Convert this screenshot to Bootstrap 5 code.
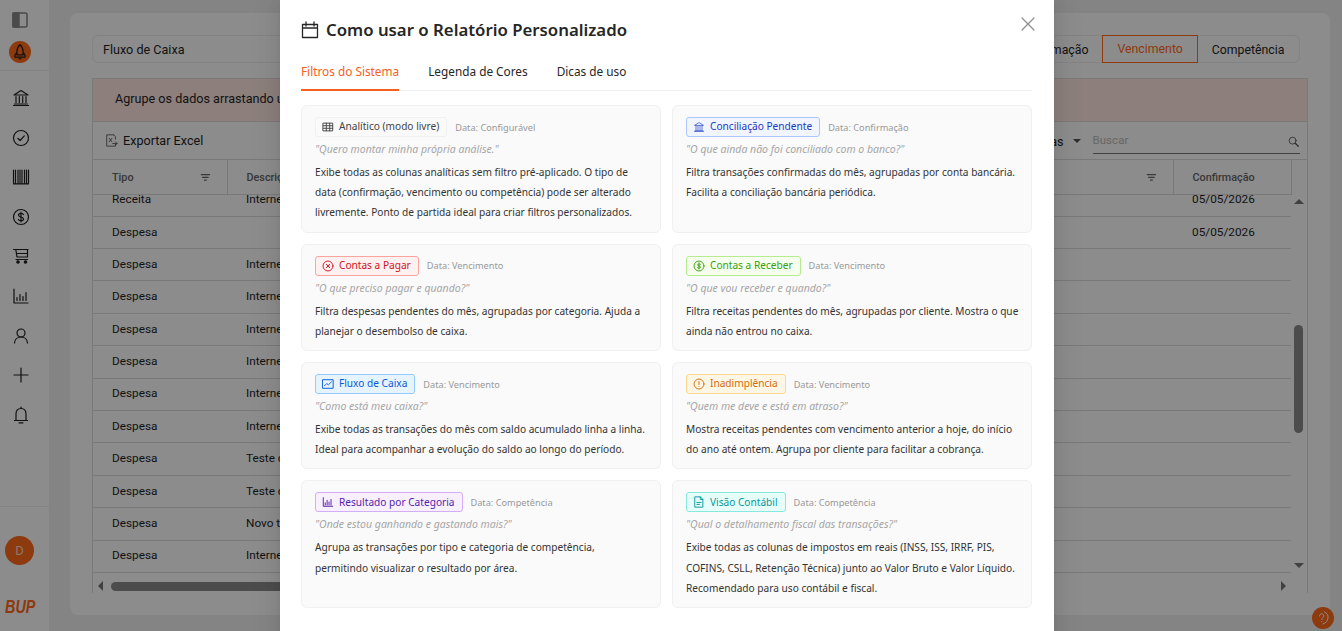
<!DOCTYPE html>
<html lang="pt-BR">
<head>
    <meta charset="UTF-8">
    <meta name="viewport" content="width=device-width, initial-scale=1.0">
    <title>Relatório Personalizado</title>
    <link href="https://cdn.jsdelivr.net/npm/bootstrap@5.3.0/dist/css/bootstrap.min.css" rel="stylesheet">
    <style>
        html, body { height: 631px; overflow: hidden; }
        body { background: #f0f0f0; font-family: Roboto, "Liberation Sans", sans-serif; font-size: 12.6px; color: #1f1f1f; }
        .ico { width: 1em; height: 1em; fill: none; stroke: currentColor; stroke-width: 1.5; stroke-linecap: round; stroke-linejoin: round; flex: none; }

        /* sidebar */
        .side-bar { width: 49px; height: 631px; background: #fff; flex: none; }
        .side-top { height: 71px; border-bottom: 1px solid #efefef; padding: 10px 9px 0 0; }
        .side-top .ico { font-size: 20px; }
        .rocket-dot { width: 22px; height: 22px; border-radius: 50%; background: #ff6a1a; color: #1f1f1f; margin-top: 11px; }
        .rocket-dot .ico { font-size: 18px; stroke-width: 1.1; }
        .side-menu { height: 435px; padding: 17px 7px 0 0; gap: 19.6px; }
        .side-menu .ico { font-size: 20px; stroke-width: 1.2; }
        .side-foot { border-top: 1px solid #efefef; height: 125px; padding-top: 29px; }
        .avatar-d { width: 29px; height: 29px; border-radius: 50%; background: #ff6a1a; color: #ffd9c4; font-size: 13px; margin-left: -10px; }
        .bup-logo { color: #ff6a1a; font: italic 700 18px/1 "Liberation Sans", sans-serif; margin: 33px 0 0 5px; align-self: flex-start; transform: scaleX(.8); transform-origin: left; }

        /* page behind the dialog */
        .page-area { padding: 13px 14px 16px 21px; }
        .main-box { background: #fff; border-radius: 8px; height: 602px; padding: 22px; }
        .top-filters { height: 28px; margin-bottom: 15px; }
        .fake-select { width: 200px; height: 28px; border: 1px solid #eee; border-radius: 6px; padding: 0 10px; line-height: 28px; }
        .segment { border: 1px solid #eee; border-radius: 6px; height: 28px; margin-right: 8px; font-size: 12.3px; }
        .segment span { padding: 0 14px; line-height: 28px; }
        .segment .seg-on { border: 1px solid #ff6a1a; color: #ff6a1a; margin: -1px 0; height: 28px; line-height: 26px; padding: 0 14px; }
        .grid-box { border: 1px solid #ddd; height: 515px; }
        .group-panel { height: 43px; background: #ffe8e2; border-bottom: 1px solid #ddd; padding-left: 22px; line-height: 40px; }
        .grid-tools { height: 38px; border-bottom: 1px solid #ddd; padding: 0 7px 0 12px; }
        .grid-tools .ico { font-size: 13px; color: #555; stroke-width: 1; }
        .export-btn { gap: 5px; padding-top: 1px; }
        .cols-caret { width: 0; height: 0; border: 4px solid transparent; border-top-color: #555; border-bottom: 0; margin-left: 9px; }
        .search-box { width: 207px; height: 27px; border-bottom: 1px solid #777; color: #bbb; margin-left: 12px; font-size: 11.6px; padding-top: 2px; }
        .grid-table { table-layout: fixed; width: 1198px; margin: 0; border-collapse: collapse; }
        .grid-head th { height: 34px; border-bottom: 1px solid #ddd; border-right: 1px solid #ddd; font-weight: 500; font-size: 10.800px; color: #666; padding: 2px 16px 0 19px; background: #fff; }
        .grid-body { height: 379px; overflow: hidden; }
        .grid-scroll-y { width: 15px; background: #fff; }
        .grid-rows { margin-top: -10.700px; }
        .grid-rows td { height: 32.400px; border-bottom: 1px solid #ddd; padding: 0 19px; white-space: nowrap; overflow: hidden; background: #fff; font-size: 11.800px; line-height: 1; }
        .v-thumb { position: absolute; left: 2px; top: 165px; width: 9px; height: 108px; border-radius: 5px; background: #8a8a8a; }
        .h-bar { height: 20px; background: #fff; position: relative; }
        .h-thumb { position: absolute; left: 18px; top: 8px; width: 400px; height: 9px; border-radius: 5px; background: #8a8a8a; }
        .arrow-l, .arrow-r, .arrow-u, .arrow-d { position: absolute; width: 0; height: 0; border: 5px solid transparent; }
        .arrow-l { left: 5px; top: 7px; border-right-color: #777; border-left: 0; }
        .arrow-r { right: 21px; top: 7px; border-left-color: #777; border-right: 0; }
        .arrow-u { left: 2px; top: 39px; border-bottom-color: #777; border-top: 0; }
        .arrow-d { left: 2px; bottom: 6px; border-top-color: #777; border-bottom: 0; }
        .help-bubble { position: absolute; left: 1312px; top: 607px; width: 22px; height: 22px; border-radius: 50%; background: #ff6a1a; color: #fff; z-index: 1; }
        .help-bubble .ico { font-size: 16px; stroke-width: 1; }

        /* dialog */
        .dim-layer { position: absolute; inset: 0; background: rgba(0,0,0,.45); z-index: 2; overflow: hidden; }
        .help-dialog { position: absolute; left: 280px; top: -8px; width: 774px; height: 660px; background: #fff; border-radius: 8px; padding: 26px 22px 0 21px; box-shadow: 0 6px 16px rgba(0,0,0,.08), 0 3px 6px -4px rgba(0,0,0,.12), 0 9px 28px 8px rgba(0,0,0,.05); font-family: "Noto Sans", "Open Sans", sans-serif; color: #262626; }
        .help-title { font-size: 16.800px; font-weight: 600; line-height: 24px; gap: 7px; margin-bottom: 14px; }
        .help-title .ico { font-size: 18px; stroke-width: 1.300; }
        .close-x { position: absolute; left: 741px; top: 25px; width: 14px; height: 14px; color: #8c8c8c; }
        .tab-row { border-bottom: 1px solid #f0f0f0; height: 35px; gap: 29px; font-size: 11.800px; line-height: 30px; margin-bottom: 14px; }
        .tab-row .tab-on { color: #f5601c; border-bottom: 2px solid #f5601c; height: 35px; }
        .filter-row { --bs-gutter-x: 11px; --bs-gutter-y: 11px; }
        .filter-row > div { padding-left: 5.500px; padding-right: 5.500px; }
        .filter-card { background: #fafafa; border: 1px solid #f0f0f0; border-radius: 6px; padding: 11px 13px 9px; height: 100%; }
        .tag-line { gap: 8px; height: 20px; }
        .tag-pill { height: 20px; border: 1px solid #f0f0f0; border-radius: 3px; padding: 0 7px 0 6px; font-size: 10.150px; gap: 5px; white-space: nowrap; }
        .tag-pill .ico { font-size: 12px; stroke-width: 1.100; }
        .tag-note { font-size: 9.200px; color: #999; padding-top: 1px; }
        .tag-ask { font-size: 10.500px; font-style: italic; color: #a6a6a6; line-height: 16px; margin: 4px 0 5px; }
        .tag-text { font-size: 10.150px; line-height: 20.200px; color: #333; margin: 0; white-space: pre; }
        .t-gray { background: #fafafa; border-color: #f0f0f0; color: #444; }
        .t-geek { background: #f0f5ff; border-color: #adc6ff; color: #1d39c4; }
        .t-red { background: #fff1f0; border-color: #ffa39e; color: #cf1322; }
        .t-green { background: #f6ffed; border-color: #b7eb8f; color: #389e0d; }
        .t-blue { background: #e6f4ff; border-color: #91caff; color: #0958d9; }
        .t-orange { background: #fff7e6; border-color: #ffd591; color: #d46b08; }
        .t-purple { background: #f9f0ff; border-color: #d3adf7; color: #531dab; }
        .t-cyan { background: #e6fffb; border-color: #87e8de; color: #08979c; }
    </style>
</head>
<body>
    <svg width="0" height="0" class="d-block position-absolute">
        <symbol id="i-bank" viewBox="0 0 20 20"><path d="M3 7 10 2.500 17 7zM3.500 16h13M2.500 17.500h15M5 8.500V14.500M8.300 8.500V14.500M11.700 8.500V14.500M15 8.500V14.500"/></symbol>
        <symbol id="i-check" viewBox="0 0 20 20"><circle cx="10" cy="10" r="7.500"/><path d="m6.800 10.300 2.300 2.200 4.200-4.600"/></symbol>
        <symbol id="i-barcode" viewBox="0 0 20 20"><path d="M2.500 3v13M4.500 3v13M7 3v13M9 3v13M11 3v13M13.500 3v13M15.500 3v13M17.500 3v13M2.500 16.800h15"/></symbol>
        <symbol id="i-dollar" viewBox="0 0 20 20"><circle cx="10" cy="10" r="7.500"/><path d="M12.500 7.500C12 6.600 11 6.300 10 6.300c-1.400 0-2.500.7-2.500 1.800 0 2.700 5 1.200 5 3.900 0 1.100-1.100 1.800-2.500 1.800-1.100 0-2.100-.4-2.600-1.300M10 5v10"/></symbol>
        <symbol id="i-cart" viewBox="0 0 20 20"><path d="M2.500 3.500h14.500M16.500 3.500V11H6L4.800 3.500M5 13.500h11.500M6 7.500h10.500"/><circle cx="7" cy="16" r="1.200" fill="currentColor"/><circle cx="14.500" cy="16" r="1.200" fill="currentColor"/></symbol>
        <symbol id="i-bars" viewBox="0 0 20 20"><path d="M3 3v14h14M6 14.500v-3M9 14.500V8.500M12 14.500v-4M15 14.500V6.500"/></symbol>
        <symbol id="i-user" viewBox="0 0 20 20"><circle cx="10" cy="7" r="4"/><path d="M3.500 17c.3-3.400 2.800-6 6.500-6s6.200 2.600 6.500 6"/></symbol>
        <symbol id="i-plus" viewBox="0 0 20 20"><path d="M10 3v14M3 10h14"/></symbol>
        <symbol id="i-bell" viewBox="0 0 20 20"><path d="M5 15.500V9c0-3.200 1.900-5.500 5-5.500s5 2.300 5 5.500v6.500M3.500 15.500h13M10 2v1.500M8 17.800h4"/></symbol>
        <symbol id="i-grid" viewBox="0 0 14 14"><path d="M1.500 2.500h11v9h-11zM1.500 5.500h11M1.500 8.500h11M5 2.500v9M9 2.500v9"/></symbol>
        <symbol id="i-xcircle" viewBox="0 0 14 14"><circle cx="7" cy="7" r="5.800"/><path d="m5 5 4 4M9 5 5 9"/></symbol>
        <symbol id="i-dollar-s" viewBox="0 0 14 14"><circle cx="7" cy="7" r="5.800"/><path d="M8.700 5.200C8.300 4.700 7.700 4.500 7 4.500c-1 0-1.700.5-1.700 1.200 0 1.700 3.500.8 3.500 2.600 0 .7-.8 1.200-1.800 1.200-.7 0-1.300-.2-1.800-.8M7 3.500v7"/></symbol>
        <symbol id="i-fund" viewBox="0 0 14 14"><path d="M1 2h12v10H1zM3 9l2.500-2.500 2 1.500L11 4.500"/></symbol>
        <symbol id="i-warn" viewBox="0 0 14 14"><circle cx="7" cy="7" r="5.800"/><path d="M7 4v3.600M7 9.700v.1"/></symbol>
        <symbol id="i-bars-s" viewBox="0 0 14 14"><path d="M1.500 2V12h11M3.800 10.500V8M6 10.500V5M8.200 10.500V7M10.500 10.500V4"/></symbol>
        <symbol id="i-file" viewBox="0 0 14 14"><path d="M2.500 1h6l3 3v9h-9zM8.500 1v3h3M4.500 7.500h5M4.500 9.800h3"/></symbol>
        <symbol id="i-calendar" viewBox="0 0 18 18"><path d="M1.500 3.500h15v13h-15zM1.500 7h15M5 1v4M13 1v4"/></symbol>
        <symbol id="i-filter" viewBox="0 0 12 12"><path d="M1.500 3h9M3 6h6M5 9h2"/></symbol>
    </svg>

    <div class="d-flex">
        <aside class="side-bar d-flex flex-column">
            <div class="side-top d-flex flex-column align-items-center">
                <svg class="ico" viewBox="0 0 20 20"><rect x="3" y="3" width="14" height="14" rx="1.500" fill="#fff" stroke="#888"/><rect x="3" y="3" width="6" height="14" fill="#888" stroke="#888"/></svg>
                <div class="rocket-dot d-flex align-items-center justify-content-center">
                    <svg class="ico" viewBox="0 0 16 16"><path d="M8 1.500c1.800 1.500 2.700 3.500 2.700 6v3H5.300v-3C5.300 5 6.200 3 8 1.500zM5.300 8 3.500 11v1.500h9V11L10.700 8M7 14h2"/></svg>
                </div>
            </div>
            <nav class="side-menu d-flex flex-column align-items-center">
                <svg class="ico"><use href="#i-bank"/></svg>
                <svg class="ico"><use href="#i-check"/></svg>
                <svg class="ico"><use href="#i-barcode"/></svg>
                <svg class="ico"><use href="#i-dollar"/></svg>
                <svg class="ico"><use href="#i-cart"/></svg>
                <svg class="ico"><use href="#i-bars"/></svg>
                <svg class="ico"><use href="#i-user"/></svg>
                <svg class="ico"><use href="#i-plus"/></svg>
                <svg class="ico"><use href="#i-bell"/></svg>
            </nav>
            <div class="side-foot d-flex flex-column align-items-center">
                <div class="avatar-d d-flex align-items-center justify-content-center">D</div>
                <div class="bup-logo">BUP</div>
            </div>
        </aside>

        <main class="page-area flex-grow-1">
            <div class="main-box">
                <div class="top-filters d-flex justify-content-between">
                    <div class="fake-select">Fluxo de Caixa</div>
                    <div class="segment d-flex">
                        <span>Confirmação</span><span class="seg-on">Vencimento</span><span>Competência</span>
                    </div>
                </div>
                <div class="grid-box">
                    <div class="group-panel">Agrupe os dados arrastando uma coluna aqui</div>
                    <div class="grid-tools d-flex align-items-center justify-content-between">
                        <div class="export-btn d-flex align-items-center">
                            <svg class="ico" viewBox="0 0 15 15"><path d="M10 1H2v13h10v-2M10 1l2 2v3M5 5l3 4M8 5 5 9M9 11h5l-2-2M14 11l-2 2"/></svg>
                            <span>Exportar Excel</span>
                        </div>
                        <div class="d-flex align-items-center">
                            <span class="mt-1">Colunas</span>
                            <span class="cols-caret"></span>
                            <div class="search-box d-flex align-items-center justify-content-between">
                                Buscar
                                <svg class="ico" viewBox="0 0 15 15"><circle cx="6.500" cy="6.500" r="4"/><path d="m9.500 9.500 3.500 3.500" stroke-width="1.500"/></svg>
                            </div>
                        </div>
                    </div>
                    <div class="d-flex">
                        <div class="flex-grow-1">
                            <table class="grid-table grid-head">
                                <colgroup><col style="width:134px"><col style="width:400px"><col style="width:546px"><col style="width:118px"></colgroup>
                                <tr>
                                    <th><div class="d-flex justify-content-between align-items-center">Tipo <svg class="ico"><use href="#i-filter"/></svg></div></th>
                                    <th>Descrição</th>
                                    <th><div class="d-flex justify-content-end"><svg class="ico"><use href="#i-filter"/></svg></div></th>
                                    <th>Confirmação</th>
                                </tr>
                            </table>
                            <div class="grid-body">
                                <table class="grid-table grid-rows" id="rows">
                                    <colgroup><col style="width:134px"><col style="width:400px"><col style="width:546px"><col style="width:118px"></colgroup>
                                </table>
                            </div>
                        </div>
                        <div class="grid-scroll-y position-relative">
                            <div class="arrow-u"></div>
                            <div class="v-thumb"></div>
                            <div class="arrow-d"></div>
                        </div>
                    </div>
                    <div class="h-bar">
                        <div class="arrow-l"></div>
                        <div class="h-thumb"></div>
                        <div class="arrow-r"></div>
                    </div>
                </div>
            </div>
        </main>
    </div>

    <div class="help-bubble d-flex align-items-center justify-content-center">
        <svg class="ico" viewBox="0 0 16 16"><path d="M4.500 6c0-1.300 1-2.200 2.200-2.200S8.800 4.700 8.800 6c0 1.500-2 1.700-2 3.500M6.800 11.500v.1M9.500 2c2.800 1 3.800 3.500 3.500 6-.3 2.700-2 5-5 6"/></svg>
    </div>

    <div class="dim-layer">
        <section class="help-dialog">
            <svg class="close-x ico" viewBox="0 0 14 14"><path d="m1 1 12 12M13 1 1 13" stroke-width="1.200"/></svg>
            <h5 class="help-title d-flex align-items-center">
                <svg class="ico"><use href="#i-calendar"/></svg>
                Como usar o Relatório Personalizado
            </h5>
            <div class="tab-row d-flex">
                <div class="tab-on">Filtros do Sistema</div>
                <div>Legenda de Cores</div>
                <div>Dicas de uso</div>
            </div>
            <div class="row filter-row" id="cards"></div>
        </section>
    </div>

    <script src="https://cdn.jsdelivr.net/npm/bootstrap@5.3.0/dist/js/bootstrap.bundle.min.js"></script>
    <script>
        const rows = [
            ['Receita', 'Internet', '05/05/2026'], ['Despesa', '', '05/05/2026'],
            ['Despesa', 'Internet', ''], ['Despesa', 'Internet', ''], ['Despesa', 'Internet', ''],
            ['Despesa', 'Internet', ''], ['Despesa', 'Internet', ''], ['Despesa', 'Internet', ''],
            ['Despesa', 'Teste de', ''], ['Despesa', 'Teste de', ''], ['Despesa', 'Novo teste', ''],
            ['Despesa', 'Internet', '']
        ];
        document.getElementById('rows').insertAdjacentHTML('beforeend', rows.map(r =>
            `<tr><td>${r[0]}</td><td>${r[1]}</td><td></td><td>${r[2]}</td></tr>`).join(''));

        const cards = [
            ['t-gray', 'i-grid', 'Analítico (modo livre)', 'Configurável', 'Quero montar minha própria análise.', 'Exibe todas as colunas analíticas sem filtro pré-aplicado. O tipo de\ndata (confirmação, vencimento ou competência) pode ser alterado\nlivremente. Ponto de partida ideal para criar filtros personalizados.'],
            ['t-geek', 'i-bank', 'Conciliação Pendente', 'Confirmação', 'O que ainda não foi conciliado com o banco?', 'Filtra transações confirmadas do mês, agrupadas por conta bancária.\nFacilita a conciliação bancária periódica.'],
            ['t-red', 'i-xcircle', 'Contas a Pagar', 'Vencimento', 'O que preciso pagar e quando?', 'Filtra despesas pendentes do mês, agrupadas por categoria. Ajuda a\nplanejar o desembolso de caixa.'],
            ['t-green', 'i-dollar-s', 'Contas a Receber', 'Vencimento', 'O que vou receber e quando?', 'Filtra receitas pendentes do mês, agrupadas por cliente. Mostra o que\nainda não entrou no caixa.'],
            ['t-blue', 'i-fund', 'Fluxo de Caixa', 'Vencimento', 'Como está meu caixa?', 'Exibe todas as transações do mês com saldo acumulado linha a linha.\nIdeal para acompanhar a evolução do saldo ao longo do período.'],
            ['t-orange', 'i-warn', 'Inadimplência', 'Vencimento', 'Quem me deve e está em atraso?', 'Mostra receitas pendentes com vencimento anterior a hoje, do início\ndo ano até ontem. Agrupa por cliente para facilitar a cobrança.'],
            ['t-purple', 'i-bars-s', 'Resultado por Categoria', 'Competência', 'Onde estou ganhando e gastando mais?', 'Agrupa as transações por tipo e categoria de competência,\npermitindo visualizar o resultado por área.'],
            ['t-cyan', 'i-file', 'Visão Contábil', 'Competência', 'Qual o detalhamento fiscal das transações?', 'Exibe todas as colunas de impostos em reais (INSS, ISS, IRRF, PIS,\nCOFINS, CSLL, Retenção Técnica) junto ao Valor Bruto e Valor Líquido.\nRecomendado para uso contábil e fiscal.']
        ];
        document.getElementById('cards').innerHTML = cards.map(c => `
            <div class="col-6">
                <div class="filter-card">
                    <div class="tag-line d-flex align-items-center">
                        <span class="tag-pill d-inline-flex align-items-center ${c[0]}"><svg class="ico"><use href="#${c[1]}"/></svg>${c[2]}</span>
                        <span class="tag-note">Data: ${c[3]}</span>
                    </div>
                    <div class="tag-ask">"${c[4]}"</div>
                    <p class="tag-text">${c[5]}</p>
                </div>
            </div>`).join('');
    </script>
</body>
</html>
